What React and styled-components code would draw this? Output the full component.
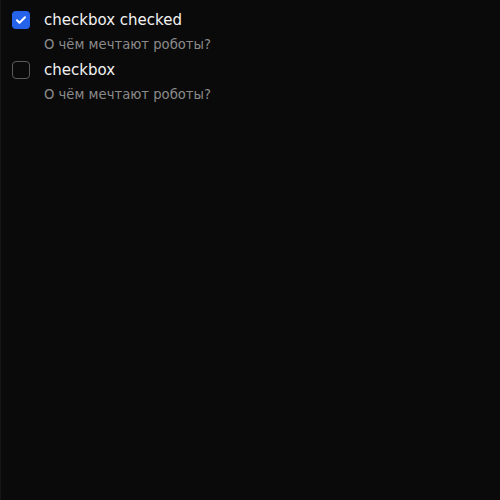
import styled, { createGlobalStyle } from "styled-components"

const GlobalStyle = createGlobalStyle`
  html, body {
    margin: 0;
    padding: 0;
    background: #0a0a0a;
  }
  body {
    font-family: "DejaVu Sans", sans-serif;
  }
`

const items = [
  { label: "checkbox checked", description: "О чём мечтают роботы?", checked: true },
  { label: "checkbox", description: "О чём мечтают роботы?", checked: false },
]

export default function App() {
  return (
    <>
      <GlobalStyle />
      <Page>
        <List>
          {items.map((item) => (
            <Item key={item.label}>
              <Box $checked={item.checked}>
                {item.checked && (
                  <svg width="12" height="12" viewBox="0 0 24 24" fill="none" stroke="#fff" strokeWidth="4" strokeLinecap="round" strokeLinejoin="round">
                    <path d="M4 12.5l5 5L20 6.5" />
                  </svg>
                )}
              </Box>
              <Texts>
                <Label>{item.label}</Label>
                <Description>{item.description}</Description>
              </Texts>
            </Item>
          ))}
        </List>
      </Page>
    </>
  )
}

const Page = styled.div`
  width: 500px;
  height: 500px;
  box-sizing: border-box;
  background: #0a0a0a;
  border-left: 1px solid #161616;
  padding: 9px 11px;
`

const List = styled.div`
  display: flex;
  flex-direction: column;
  gap: 2px;
`

const Item = styled.div`
  display: flex;
  align-items: flex-start;
  gap: 14px;
`

const Box = styled.div`
  width: 18px;
  height: 18px;
  margin-top: 2px;
  box-sizing: border-box;
  border-radius: 4px;
  display: flex;
  align-items: center;
  justify-content: center;
  background: ${(p) => (p.$checked ? "#2563eb" : "transparent")};
  border: ${(p) => (p.$checked ? "none" : "1.5px solid #5a5a5a")};
`

const Texts = styled.div`
  display: flex;
  flex-direction: column;
`

const Label = styled.span`
  color: #f2f2f2;
  font-size: 15px;
  line-height: 22px;
`

const Description = styled.span`
  color: #8a8a8a;
  font-size: 13.2px;
  line-height: 24px;
  padding-top: 2px;
`
